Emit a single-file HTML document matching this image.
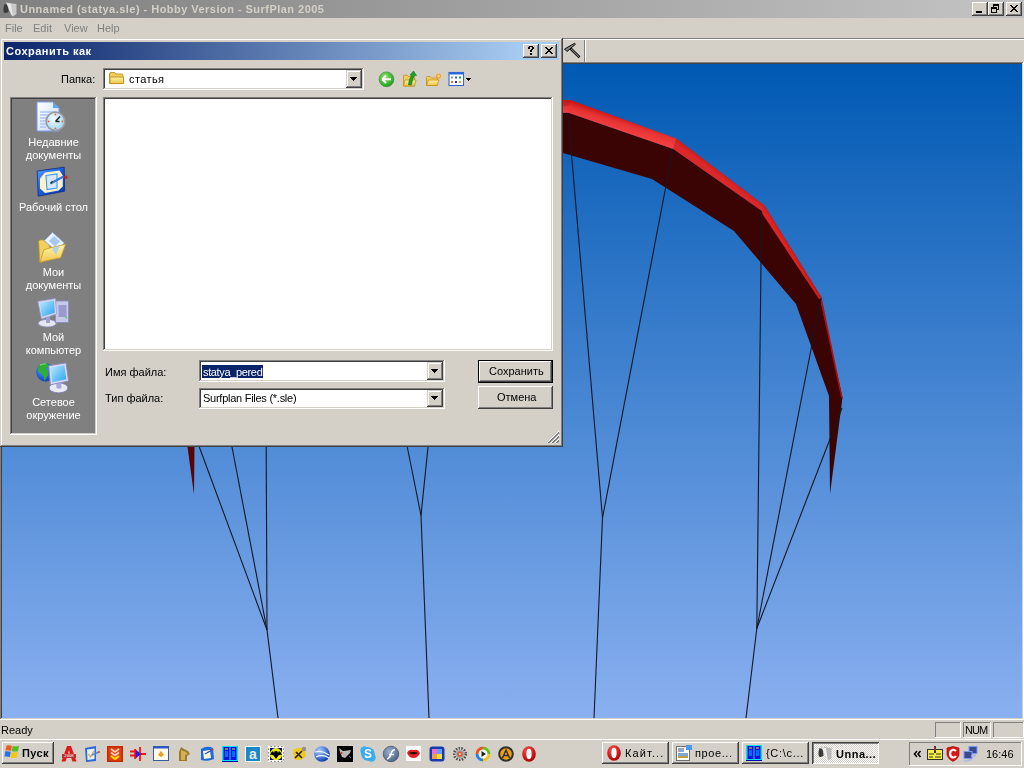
<!DOCTYPE html>
<html><head><meta charset="utf-8">
<style>
*{margin:0;padding:0;box-sizing:border-box}
html,body{width:1024px;height:768px;overflow:hidden;background:#d4d0c8;font-family:"Liberation Sans",sans-serif;font-size:11px;color:#000}
.a{position:absolute}
.t{position:absolute;white-space:nowrap;line-height:13px;will-change:transform}
.btn{position:absolute;background:#d4d0c8;box-shadow:inset -1px -1px #404040,inset 1px 1px #fff,inset -2px -2px #808080,inset 2px 2px #d4d0c8}
.sunk{position:absolute;background:#fff;box-shadow:inset -1px -1px #fff,inset 1px 1px #808080,inset -2px -2px #d4d0c8,inset 2px 2px #404040}
.sp{position:absolute;box-shadow:inset -1px -1px #fff,inset 1px 1px #808080}
.qi{width:16px;height:16px}
.pt{position:absolute;left:10px;width:87px;text-align:center;color:#fff;line-height:13px;white-space:nowrap;will-change:transform}
.dd{position:absolute;background:#d4d0c8;box-shadow:inset -1px -1px #404040,inset 1px 1px #d4d0c8,inset -2px -2px #808080,inset 2px 2px #fff}
.sy{}
</style></head><body>
<!-- main title bar -->
<div class="a" style="left:0;top:0;width:1024px;height:18px;background:linear-gradient(to right,#808080 0,#c0c0c0 966px)"></div>
<div class="t" style="left:20px;top:3px;font-weight:bold;color:#d4d0c8;letter-spacing:0.47px">Unnamed (statya.sle) - Hobby Version - SurfPlan 2005</div>
<div class="btn" style="left:972px;top:2px;width:16px;height:14px"></div>
<div class="btn" style="left:988px;top:2px;width:16px;height:14px"></div>
<div class="btn" style="left:1006px;top:2px;width:16px;height:14px"></div>
<!-- main title icons -->
<svg class="a" style="left:0;top:0" width="1024" height="64" viewBox="0 0 1024 64">
<path d="M4.5 4Q3 8 3.5 11Q4 13.5 5.5 13L8.5 12L8 5Z" fill="#3a3a3a"/>
<path d="M6 2.5L16.5 4V14L13 16.5L11.5 15Q9 10 6 2.5Z" fill="#c8c8c8"/>
<path d="M7 3L11 4Q12 12 13 16L11.5 15Q9 10 7 3Z" fill="#e8e8e8"/>
<rect x="976" y="11" width="6" height="2" fill="#000"/>
<g fill="#000"><rect x="993" y="4" width="6" height="2"/><rect x="993" y="6" width="1" height="1"/><rect x="998" y="6" width="1" height="4"/><rect x="997" y="9" width="1" height="1"/><rect x="991" y="7" width="6" height="2"/><rect x="991" y="9" width="1" height="3"/><rect x="996" y="9" width="1" height="3"/><rect x="991" y="12" width="6" height="1"/></g>
<g fill="#000"><rect x="1010" y="5" width="2" height="1"/><rect x="1016" y="5" width="2" height="1"/><rect x="1011" y="6" width="2" height="1"/><rect x="1015" y="6" width="2" height="1"/><rect x="1012" y="7" width="4" height="1"/><rect x="1013" y="8" width="2" height="1"/><rect x="1012" y="9" width="4" height="1"/><rect x="1011" y="10" width="2" height="1"/><rect x="1015" y="10" width="2" height="1"/><rect x="1010" y="11" width="2" height="1"/><rect x="1016" y="11" width="2" height="1"/></g>
<!-- hammer -->
<path d="M564.5 49L574.5 43.3L575.5 44.2L567 51.5Z" fill="#808080" stroke="#000" stroke-width="0.9" stroke-linejoin="round"/>
<path d="M570.5 48.5L579.5 57.3" stroke="#000" stroke-width="2.6"/>
<path d="M571 48.8L579 56.8" stroke="#808080" stroke-width="1.2"/>
<rect x="584" y="40" width="1" height="22" fill="#808080"/>
<rect x="585" y="40" width="1" height="22" fill="#fff"/>
</svg>
<!-- menu -->
<div class="t" style="left:5px;top:22px;color:#808080">File</div>
<div class="t" style="left:33px;top:22px;color:#808080">Edit</div>
<div class="t" style="left:64px;top:22px;color:#808080">View</div>
<div class="t" style="left:97px;top:22px;color:#808080">Help</div>
<div class="a" style="left:0;top:38px;width:1024px;height:1px;background:#808080"></div>
<div class="a" style="left:0;top:39px;width:1024px;height:1px;background:#fff"></div>
<!-- toolbar -->
<!-- viewport -->
<div class="a" style="left:0;top:62px;width:1024px;height:658px;background:#d4d0c8;box-shadow:inset -1px -1px #fff,inset 1px 1px #808080,inset -2px -2px #d4d0c8,inset 2px 2px #404040"></div>
<div class="a" style="left:2px;top:64px;width:1020px;height:654px;background:linear-gradient(to bottom,#0059b3,#8ab0f0)"></div>
<!-- status -->
<div class="t" style="left:1px;top:724px">Ready</div>
<!-- taskbar -->
<div class="a" style="left:0;top:739px;width:1024px;height:1px;background:#fff"></div>
<div class="btn" style="left:2px;top:742px;width:52px;height:22px"></div>
<div class="t" style="left:22px;top:747px;font-weight:bold;letter-spacing:0.4px">Пуск</div>
<div class="sp" style="left:935px;top:722px;width:26px;height:16px"></div>
<div class="sp" style="left:963px;top:722px;width:28px;height:16px"></div>
<div class="t" style="left:965px;top:724px;letter-spacing:-0.9px">NUM</div>
<div class="sp" style="left:993px;top:722px;width:31px;height:16px"></div>
<div class="btn" style="left:602px;top:742px;width:67px;height:22px"></div>
<div class="t" style="left:625px;top:747px;letter-spacing:1.1px">Кайт...</div>
<div class="btn" style="left:672px;top:742px;width:67px;height:22px"></div>
<div class="t" style="left:695px;top:747px;letter-spacing:0.6px">прое...</div>
<div class="btn" style="left:742px;top:742px;width:67px;height:22px"></div>
<div class="t" style="left:766px;top:747px;letter-spacing:0.7px">{C:\c...</div>
<div class="a" style="left:812px;top:742px;width:67px;height:22px;background:repeating-conic-gradient(#fff 0 25%,#d4d0c8 0 50%) 0 0/2px 2px;box-shadow:inset 1px 1px #404040,inset -1px -1px #fff,inset 2px 2px #808080"></div>
<div class="t" style="left:836px;top:748px;font-weight:bold;letter-spacing:0.5px">Unna...</div>
<div class="sp" style="left:909px;top:742px;width:113px;height:24px"></div>
<div class="t" style="left:986px;top:748px">16:46</div>

<!-- kite -->
<svg class="a" style="left:0;top:0" width="1024" height="768" viewBox="0 0 1024 768">
<defs><clipPath id="vp"><rect x="2" y="64" width="1020" height="654"/></clipPath>
<linearGradient id="k1" gradientUnits="userSpaceOnUse" x1="610" y1="113" x2="606" y2="126"><stop offset="0" stop-color="#c81616"/><stop offset="0.45" stop-color="#e43232"/><stop offset="1" stop-color="#f43e3e"/></linearGradient>
<linearGradient id="k2" gradientUnits="userSpaceOnUse" x1="726" y1="169" x2="720" y2="177"><stop offset="0" stop-color="#b01010"/><stop offset="0.5" stop-color="#c81c1c"/><stop offset="1" stop-color="#dc2828"/></linearGradient>
<linearGradient id="k2b" gradientUnits="userSpaceOnUse" x1="676" y1="140" x2="765" y2="208"><stop offset="0" stop-color="#000" stop-opacity="0"/><stop offset="1" stop-color="#000" stop-opacity="0.15"/></linearGradient>
<linearGradient id="k3" gradientUnits="userSpaceOnUse" x1="795" y1="250" x2="790" y2="253"><stop offset="0" stop-color="#b81010"/><stop offset="1" stop-color="#dc2424"/></linearGradient>
</defs>
<g clip-path="url(#vp)">
<polygon fill="#3a0404" points="540,112.75 568.4,112.75 673.3,149 762,211 820,298.5 842.5,397.5 830,494 829,396 796,304 734,231 652,179 563,153 540,145"/>
<polygon fill="url(#k1)" points="540,100 570.6,100 676.4,138.4 673.3,149 568.4,112.75 540,112.75"/>
<polygon fill="url(#k2)" points="676.4,138.4 764.7,205.5 762,211 673.3,149"/>
<polygon fill="url(#k3)" points="764.7,205.5 821.5,297 819.2,299.3 761,211.8"/>
<polygon fill="#b80a0a" points="821.5,297 842.5,397.5 841,397.5 820,298.8"/>
<polygon fill="#b81414" opacity="0.45" points="540,100 570.6,100 568.4,106 540,106"/>
<polygon fill="#5a0404" points="187.5,447 194.5,447 194,494.5"/>
<g stroke="#141822" stroke-width="1.1" fill="none">
<path d="M568 113L602.5 518L594 718"/>
<path d="M673 149L602.5 518"/>
<path d="M761.6 211L756.8 628.5L746 718"/>
<path d="M821 298L756.8 628.5"/>
<path d="M842 408L756.8 628.5"/>
<path d="M199.3 447L267 630L278 718"/>
<path d="M232 447L267 630"/>
<path d="M266.2 447L267 630"/>
<path d="M407.3 447L421 515.5L429 718"/>
<path d="M428 447L421 515.5"/>
</g>
</g>
</svg>
<svg class="a" style="left:0;top:738px" width="1024" height="30" viewBox="0 738 1024 30">
<defs>
<radialGradient id="opg" cx="0.4" cy="0.3" r="0.7"><stop offset="0" stop-color="#ff5050"/><stop offset="1" stop-color="#b00000"/></radialGradient>
<radialGradient id="geg" cx="0.35" cy="0.3" r="0.75"><stop offset="0" stop-color="#a8d0ff"/><stop offset="1" stop-color="#0a38b0"/></radialGradient>
<radialGradient id="flg" cx="0.4" cy="0.35" r="0.7"><stop offset="0" stop-color="#9ab0d0"/><stop offset="1" stop-color="#4a6088"/></radialGradient>
</defs>
<!-- start flag -->
<g transform="translate(4.5,745)">
<path d="M2 0.5Q4 -0.3 7.5 0.8L6.5 6Q3.5 5 1 5.5Z" fill="#f05a1a"/>
<path d="M8.2 1Q11 2 14.5 0.8L13.5 6.2Q10.5 7 7.2 6.2Z" fill="#50c020"/>
<path d="M0.8 6.3Q3.5 5.8 6.3 6.8L5.3 12Q2.5 11 0 11.6Z" fill="#2a70e8"/>
<path d="M7 7Q10.5 8 13.4 7L12.4 12.5Q9.5 13.4 6 12.4Z" fill="#f8c810"/>
</g>
<!-- quick launch -->
<g transform="translate(61,746)"><path d="M6 0H10L15.5 15.5H11.5L10 11H6L4.5 15.5H0.5Z M7 7.5H9L8 4Z" fill="#e01818" fill-rule="evenodd"/><rect x="1" y="8" width="14" height="4" fill="#b83030"/><text x="8" y="11.4" font-size="4.2" fill="#fff" text-anchor="middle" font-family="Liberation Sans">2008</text></g>
<g transform="translate(84,746)"><path d="M1 2L12 0V15L2 16Z" fill="#2a6ad8"/><path d="M3 3.5L10.5 2.5V13L3.5 14Z" fill="#e8f0ff"/><path d="M4.5 8L6.5 11L10 5" stroke="#d8b040" stroke-width="1.4" fill="none"/><path d="M8 9L15 6" stroke="#4a8ae0" stroke-width="1.5"/><circle cx="15" cy="6" r="1" fill="#e05020"/></g>
<g transform="translate(107,746)"><rect x="0" y="0" width="16" height="16" fill="#c02a00"/><rect x="1.5" y="1.5" width="13" height="13" fill="#e04010"/><path d="M4 3L8 6L12 3M4 6.5L8 9.5L12 6.5" stroke="#ffd0c0" stroke-width="1.6" fill="none"/><path d="M4 10L8 13L12 10" stroke="#ffe800" stroke-width="2" fill="none"/></g>
<g transform="translate(130,746)"><path d="M0 5.5H6M0 9.5H6M10 8H16M10 1V15" stroke="#ff1010" stroke-width="1.8"/><path d="M5 3V13L11 8Z" fill="#1a20e0"/><path d="M5 3V13" stroke="#ff1010" stroke-width="1.6"/></g>
<g transform="translate(153,746)"><rect x="0.5" y="0.5" width="15" height="14" fill="#fdf8e8" stroke="#3a5a9a"/><rect x="0.5" y="0.5" width="15" height="2" fill="#2a5ac8"/><path d="M5 9L8 5L11 9L8 11Z" fill="#e0a020"/></g>
<g transform="translate(176,746)"><path d="M3 15L3 6L5 1L8 3L12 5L14 8L11 10L11 15Z" fill="#9a7a30"/><path d="M5 4L10 6L12 8L9 9L9 14L5 14Z" fill="#d4b050"/></g>
<g transform="translate(199,746)"><path d="M2 3Q8 -1 14 2L15 13Q9 16 2 14Z" fill="#1a6ae0"/><path d="M4 5L11 4L12 12L5 13Z" fill="#fff4d8"/><path d="M6 8L13 4" stroke="#2a5ab0" stroke-width="1.4"/><circle cx="13.5" cy="3.5" r="1.1" fill="#e04020"/></g>
<g transform="translate(222,746)"><rect x="0" y="0" width="16" height="15" fill="#00e0f0"/><rect x="1.5" y="1" width="6" height="13" fill="#1010e0"/><rect x="8.5" y="1" width="6" height="13" fill="#1010e0"/><path d="M3 3H6M10 3H13" stroke="#ffe000" stroke-width="1"/><path d="M3 6H6M10 6H13M3 8H6M10 8H13M3 10H6M10 10H13" stroke="#00e0f0" stroke-width="0.9"/><rect x="0" y="15" width="16" height="1" fill="#0000a0"/></g>
<g transform="translate(245,746)"><rect x="0" y="0" width="16" height="16" fill="#fff"/><rect x="1" y="1" width="14" height="14" fill="#1a88c8"/><text x="8" y="13" font-size="14" font-weight="bold" fill="#e8e8e8" text-anchor="middle" font-family="Liberation Sans">a</text></g>
<g transform="translate(268,746)"><rect x="0" y="0" width="16" height="16" fill="#fff"/><g fill="#888"><rect x="2.5" y="0" width="1.5" height="1.2"/><rect x="6" y="0" width="1.5" height="1.2"/><rect x="9.5" y="0" width="1.5" height="1.2"/><rect x="13" y="0" width="1.5" height="1.2"/><rect x="2.5" y="14.8" width="1.5" height="1.2"/><rect x="6" y="14.8" width="1.5" height="1.2"/><rect x="9.5" y="14.8" width="1.5" height="1.2"/><rect x="13" y="14.8" width="1.5" height="1.2"/><rect x="0" y="2.5" width="1.2" height="1.5"/><rect x="0" y="6" width="1.2" height="1.5"/><rect x="0" y="9.5" width="1.2" height="1.5"/><rect x="0" y="13" width="1.2" height="1.5"/><rect x="14.8" y="2.5" width="1.2" height="1.5"/><rect x="14.8" y="6" width="1.2" height="1.5"/><rect x="14.8" y="9.5" width="1.2" height="1.5"/><rect x="14.8" y="13" width="1.2" height="1.5"/></g><rect x="2" y="2" width="12" height="12" fill="#00088a"/><circle cx="8" cy="8.2" r="6.1" fill="#f4f000"/><path d="M2 9Q3 6 5 5L6 7L7 4.5L8 5.5L9 4.5L10 7L11 5Q13 6 14 9Q12 8.5 10.5 9.5L8 13L5.5 9.5Q4 8.5 2 9Z" fill="#000"/></g>
<g transform="translate(291,746)"><path d="M2 4Q8 0 14 3L15 10Q10 16 3 13Z" fill="#f0c820"/><path d="M4 12L11 5M5 6L11 12" stroke="#222" stroke-width="1.6"/><circle cx="13" cy="3" r="2.2" fill="#909090"/></g>
<g transform="translate(314,746)"><circle cx="8" cy="8" r="7.8" fill="url(#geg)"/><path d="M1 6Q8 4 15 9M2 11Q9 8 15 12" stroke="#f0f8ff" stroke-width="1.3" fill="none"/></g>
<g transform="translate(337,746)"><rect x="0" y="0" width="16" height="16" fill="#000"/><path d="M2 2L6 5L14 4L13 7L8 12L5 11L3 6Z" fill="#b8b8b8"/><circle cx="4.5" cy="7" r="0.9" fill="#e02020"/><path d="M12 10L14 12" stroke="#6060e0" stroke-width="1"/></g>
<g transform="translate(360,746)"><circle cx="4.5" cy="4.5" r="4.3" fill="#40b0f0"/><circle cx="11.5" cy="11.5" r="4.3" fill="#40b0f0"/><circle cx="8" cy="8" r="6.8" fill="#38a8f0"/><text x="8" y="12.3" font-size="12" font-weight="bold" fill="#fff" text-anchor="middle" font-family="Liberation Sans">S</text></g>
<g transform="translate(383,746)"><circle cx="8" cy="8" r="7.8" fill="url(#flg)" stroke="#33445c" stroke-width="0.6"/><path d="M4 13Q7 12 8 8Q9 4 12 3.5M6 8.5H11" stroke="#fff" stroke-width="1.5" fill="none"/></g>
<g transform="translate(406,746)"><rect x="0" y="0" width="15" height="15" fill="#fff"/><path d="M1 7Q3 2.5 7.5 4Q12 2.5 14 7Q12 12 7.5 12Q3 12 1 7Z" fill="#e02020"/><path d="M3 7Q7.5 5 12 7Q7.5 9.5 3 7Z" fill="#111"/></g>
<g transform="translate(429,746)"><rect x="0.5" y="0.5" width="15" height="15" rx="3" fill="#1a3ab0"/><rect x="3" y="3" width="5" height="5" fill="#f070c0"/><rect x="8" y="3" width="5" height="5" fill="#60a0ff"/><rect x="3" y="8" width="5" height="5" fill="#f0a040"/><rect x="8" y="8" width="5" height="5" fill="#f0e040"/></g>
<g transform="translate(452,746)"><circle cx="8" cy="8" r="5.8" fill="none" stroke="#505050" stroke-width="2.6" stroke-dasharray="1.5 1.3"/><circle cx="8" cy="8" r="4" fill="#a0a0a0"/><circle cx="8" cy="8" r="2.6" fill="#e05020"/><circle cx="8" cy="8" r="1.2" fill="#c8c8c8"/></g>
<g transform="translate(475,746)"><circle cx="8" cy="8" r="7.5" fill="#fff"/><path d="M8 0.5A7.5 7.5 0 0 1 15.5 8H12.5A4.5 4.5 0 0 0 8 3.5Z" fill="#60c020"/><path d="M15.5 8A7.5 7.5 0 0 1 8 15.5V12.5A4.5 4.5 0 0 0 12.5 8Z" fill="#f0c020"/><path d="M8 15.5A7.5 7.5 0 0 1 0.5 8H3.5A4.5 4.5 0 0 0 8 12.5Z" fill="#2a80e0"/><path d="M0.5 8A7.5 7.5 0 0 1 8 0.5V3.5A4.5 4.5 0 0 0 3.5 8Z" fill="#f05020"/><path d="M6.5 5V11L11 8Z" fill="#222"/></g>
<g transform="translate(498,746)"><circle cx="8" cy="8" r="7.8" fill="#303030"/><circle cx="8" cy="8" r="5.8" fill="#f0a010"/><path d="M4.5 12L8 4L11.5 12M6 9.5H10" stroke="#303030" stroke-width="1.5" fill="none"/></g>
<g transform="translate(521,746)"><ellipse cx="8" cy="8" rx="6.8" ry="7.8" fill="url(#opg)"/><ellipse cx="8" cy="8" rx="2.6" ry="5.2" fill="#fff"/></g>
<!-- task buttons icons -->
<g transform="translate(606,745)"><ellipse cx="8" cy="8" rx="6.8" ry="7.8" fill="url(#opg)"/><ellipse cx="8" cy="8" rx="2.6" ry="5.2" fill="#fff"/></g>
<g transform="translate(676,745)"><rect x="0.5" y="1.5" width="13" height="14" fill="#fff" stroke="#707070"/><path d="M2 4H8M2 6H8" stroke="#2a4a9a" stroke-width="1"/><rect x="2" y="8" width="10" height="5" fill="#80a8d0"/><rect x="2" y="11" width="10" height="2" fill="#c0a040"/><rect x="10" y="0" width="6" height="5" fill="#4a9af0"/></g>
<g transform="translate(746,745)"><rect x="0" y="0" width="16" height="15" fill="#00e0f0"/><rect x="1.5" y="1" width="6" height="13" fill="#1010e0"/><rect x="8.5" y="1" width="6" height="13" fill="#1010e0"/><path d="M3 3H6M10 3H13" stroke="#ffe000" stroke-width="1"/><path d="M3 6H6M10 6H13M3 8H6M10 8H13M3 10H6M10 10H13" stroke="#00e0f0" stroke-width="0.9"/><rect x="0" y="15" width="16" height="1" fill="#0000a0"/></g>
<g transform="translate(815,744)"><path d="M4.5 4Q3 8 3.5 11Q4 13.5 5.5 13L8.5 12L8 5Z" fill="#3a3a3a"/><path d="M6 2.5L16.5 4V14L13 16.5L11.5 15Q9 10 6 2.5Z" fill="#b8b8b8"/><path d="M7 3L11 4Q12 12 13 16L11.5 15Q9 10 7 3Z" fill="#f0f0f0"/></g>
<!-- tray -->
<path d="M917 751L914.5 754L917 757M920.5 751L918 754L920.5 757" stroke="#000" stroke-width="1.5" fill="none"/>
<g transform="translate(927,746)"><rect x="0.5" y="3.5" width="15" height="10" fill="#f8f040" stroke="#303030"/><rect x="7" y="0" width="2" height="7" fill="#303030"/><rect x="7.5" y="1" width="1" height="4" fill="#e03020"/><path d="M2 8H7M9 8H14M2 11H6M8 11H14" stroke="#303030" stroke-width="1"/></g>
<g transform="translate(946,746)"><path d="M1 2Q7 -1 13 2L13 9Q12 13 7 15.5Q2 13 1 9Z" fill="#d81818" stroke="#a00000" stroke-width="0.6"/><path d="M10 5Q8.5 3.5 7 3.8Q4 4.5 4 8Q4.5 11.5 7.5 11.5Q9 11.5 10 10" stroke="#fff" stroke-width="2.2" fill="none"/></g>
<g transform="translate(963,746)"><rect x="6" y="0.5" width="8" height="7" fill="#3a4a90" stroke="#7a9af0"/><rect x="1" y="5.5" width="8" height="7" fill="#3a4a90" stroke="#7a9af0"/><path d="M0 15L7 13L10 14L3 16Z" fill="#b0b8e0"/><path d="M8 9L13 8V10L9 12Z" fill="#b0b8e0"/></g>
</svg>
<!-- dialog -->
<div class="a" style="left:0;top:38px;width:563px;height:409px;background:#d4d0c8;box-shadow:inset -1px -1px #404040,inset 1px 1px #d4d0c8,inset -2px -2px #808080,inset 2px 2px #fff"></div>
<div class="a" style="left:4px;top:42px;width:555px;height:18px;background:linear-gradient(to right,#0a246a 0,#a6caf0 516px)"></div>
<div class="t" style="left:6px;top:45px;font-weight:bold;color:#fff;letter-spacing:0.5px">Сохранить как</div>
<div class="btn" style="left:523px;top:44px;width:16px;height:14px"></div>
<div class="btn" style="left:541px;top:44px;width:16px;height:14px"></div>
<!-- folder row -->
<div class="t sy" style="left:61px;top:73px">Папка:</div>
<div class="sunk" style="left:103px;top:68px;width:261px;height:22px"></div>
<div class="t sy" style="left:129px;top:73px;letter-spacing:0.4px">статья</div>
<div class="dd" style="left:346px;top:70px;width:16px;height:18px"></div>
<!-- places -->
<div class="a" style="left:10px;top:97px;width:87px;height:338px;background:#808080;box-shadow:inset -1px -1px #fff,inset 1px 1px #808080,inset -2px -2px #d4d0c8,inset 2px 2px #404040"></div>
<svg class="a" style="left:0;top:0" width="110" height="440" viewBox="0 0 110 440">
<defs>
<linearGradient id="docg" x1="0" y1="0" x2="1" y2="1"><stop offset="0" stop-color="#fff"/><stop offset="1" stop-color="#c8d8f8"/></linearGradient>
<radialGradient id="clk" cx="0.4" cy="0.35" r="0.7"><stop offset="0" stop-color="#f4fcff"/><stop offset="1" stop-color="#9cd4f0"/></radialGradient>
<linearGradient id="scr" x1="0" y1="0" x2="1" y2="1"><stop offset="0" stop-color="#b8ecff"/><stop offset="1" stop-color="#2aa0f0"/></linearGradient>
<linearGradient id="fold" x1="0" y1="0" x2="0" y2="1"><stop offset="0" stop-color="#fff4b0"/><stop offset="1" stop-color="#f0c850"/></linearGradient>
<radialGradient id="glb" cx="0.4" cy="0.35" r="0.7"><stop offset="0" stop-color="#4aa8ff"/><stop offset="1" stop-color="#0a3ab8"/></radialGradient>
</defs>
<!-- recent -->
<path d="M37 102H53L59 108V131H37Z" fill="url(#docg)" stroke="#7a9ae8" stroke-width="1"/>
<path d="M53 102V108H59" fill="#5aa8f0"/>
<g stroke="#8ab4f4" stroke-width="1.2"><path d="M40 112H56M40 115H56M40 118H46M40 121H46M40 124H46M40 127H46"/></g>
<circle cx="55.5" cy="121.4" r="9.3" fill="url(#clk)" stroke="#9a9aa6" stroke-width="1.8"/>
<path d="M55.5 121.5L60 116.5M55.5 121.5H59.5" stroke="#222" stroke-width="1.4"/>
<g fill="#f05a1a"><circle cx="55.5" cy="114.5" r="0.9"/><circle cx="55.5" cy="128.3" r="0.9"/><circle cx="48.6" cy="121.4" r="0.9"/><circle cx="62.4" cy="121.4" r="0.9"/></g>
<!-- desktop -->
<defs><linearGradient id="dskg" x1="0" y1="0" x2="1" y2="1"><stop offset="0" stop-color="#5aa0f8"/><stop offset="0.5" stop-color="#1a5ad8"/><stop offset="1" stop-color="#0a3aa0"/></linearGradient></defs>
<path d="M37.2 171L64.2 167.2L64.6 191.2L38.2 196.2Z" fill="url(#dskg)" stroke="#0a2a90" stroke-width="0.8"/>
<path d="M40 178.5L45 172.5L59.5 170.5L62.8 175.5L62.8 186.5L58.5 190.5L45 193L40 188.5Z" fill="#fdf4cc"/>
<path d="M46 175.5L57 174V188L47 189.5Z" fill="#d6e8ff" stroke="#3a9af0" stroke-width="1.1"/>
<path d="M50.5 183.5L63.5 176.5" stroke="#3a78d8" stroke-width="2.2"/>
<path d="M50.5 183.5L52.5 181" stroke="#222" stroke-width="1.2"/>
<circle cx="65.8" cy="177.3" r="1.8" fill="#d82010"/>
<!-- my docs -->
<path d="M38.7 241.5Q38.7 240 40.5 240H43.5L46 242.5H48L50 248L42 262.2H39.7Z" fill="#f2d060" stroke="#c8981c" stroke-width="0.8"/>
<path d="M44.4 240.6L52.5 232.5L64.2 242.9L56 251Z" fill="#eef4ff" stroke="#8ab0f0" stroke-width="0.8"/>
<path d="M49 241L54 236L60 241.5L55 246.5Z" fill="#a8c8f8"/>
<path d="M43.9 249.8Q48 248.5 52.3 247.3L65.6 244.3L60.7 257.7L39.9 262.2Z" fill="url(#fold)" stroke="#c8981c" stroke-width="0.8"/>
<path d="M52 248.5L60 245.5L56 255Z" fill="#9cd0f8" opacity="0.8"/>
<!-- my computer -->
<ellipse cx="47.2" cy="323.2" rx="9" ry="3.8" fill="#e6e6f0" stroke="#8888b8" stroke-width="0.8"/>
<rect x="46" y="315" width="4" height="8" fill="#a0a0d0"/>
<rect x="55.5" y="301" width="13" height="21.5" fill="#c8c8e8" stroke="#8a8ac0" stroke-width="0.8"/>
<rect x="58.5" y="305" width="8" height="12" fill="#9a9ad0"/>
<circle cx="66" cy="317.5" r="0.9" fill="#40e040"/>
<path d="M37.8 301.4L55.5 298.5L56.5 314L41.5 319Z" fill="#d8d8f0" stroke="#9a9ad0" stroke-width="0.8"/>
<path d="M39.8 303L54 300.5L54.8 312.8L42 316.8Z" fill="url(#scr)"/>
<!-- network -->
<circle cx="45.4" cy="372.3" r="9.2" fill="url(#glb)"/>
<path d="M38.5 366Q42 362.5 47 363.5Q49 365 48 367L45.5 368.5L47.5 371L48.5 374.5L46 378L44.5 381L43.5 376L41 373L38 371.5Z" fill="#30b030"/>
<path d="M40 365Q43 363.5 46 364" stroke="#a8f090" stroke-width="1" fill="none" opacity="0.7"/>
<ellipse cx="58.5" cy="387.9" rx="9.4" ry="5" fill="#eaeaf4" stroke="#7a7ab0" stroke-width="0.9"/>
<path d="M56 379L61 378.5L61.5 388Q59 389.5 56.5 388Z" fill="#a8a8d8"/>
<path d="M48.75 365.75L66 362.9L68.5 381L50.4 384.75Z" fill="#d8d8f0" stroke="#8a8ac8" stroke-width="0.9"/>
<path d="M50.8 367.5L64.3 365.2L66.3 379.3L52.3 382.3Z" fill="url(#scr)"/>
</svg>
<div class="pt sy" style="top:136px">Недавние</div>
<div class="pt sy" style="top:149px">документы</div>
<div class="pt sy" style="top:201px">Рабочий стол</div>
<div class="pt sy" style="top:266px">Мои</div>
<div class="pt sy" style="top:279px">документы</div>
<div class="pt sy" style="top:331px">Мой</div>
<div class="pt sy" style="top:344px">компьютер</div>
<div class="pt sy" style="top:396px">Сетевое</div>
<div class="pt sy" style="top:409px">окружение</div>

<!-- file list -->
<div class="sunk" style="left:103px;top:97px;width:450px;height:254px"></div>
<!-- bottom -->
<div class="t sy" style="left:105px;top:366px">Имя файла:</div>
<div class="t sy" style="left:105px;top:392px">Тип файла:</div>
<div class="sunk" style="left:199px;top:360px;width:246px;height:22px"></div>
<div class="a" style="left:202px;top:365px;width:61px;height:13px;background:#0a246a"></div>
<div class="t" style="left:203px;top:366px;color:#fff;letter-spacing:-0.35px">statya_pered</div>
<div class="dd" style="left:427px;top:362px;width:16px;height:18px"></div>
<div class="sunk" style="left:199px;top:388px;width:246px;height:21px"></div>
<div class="t sy" style="left:203px;top:392px;letter-spacing:-0.26px">Surfplan Files (*.sle)</div>
<div class="dd" style="left:427px;top:390px;width:16px;height:17px"></div>
<div class="btn" style="left:478px;top:360px;width:75px;height:23px;box-shadow:inset -1px -1px #000,inset 1px 1px #000,inset -2px -2px #404040,inset 2px 2px #fff,inset -3px -3px #808080"></div>
<div class="t sy" style="left:489px;top:365px">Сохранить</div>
<div class="btn" style="left:478px;top:386px;width:75px;height:23px"></div>
<div class="t sy" style="left:497px;top:391px">Отмена</div>
<!-- dialog toolbar icons -->
<svg class="a" style="left:0;top:40px" width="563" height="60" viewBox="0 40 563 60">
<defs>
<radialGradient id="grn" cx="0.4" cy="0.35" r="0.7"><stop offset="0" stop-color="#8ee86a"/><stop offset="1" stop-color="#1a9a1a"/></radialGradient>
<linearGradient id="yf" x1="0" y1="0" x2="0" y2="1"><stop offset="0" stop-color="#fff2a8"/><stop offset="1" stop-color="#eec44a"/></linearGradient>
</defs>
<!-- combo folder icon -->
<path d="M109.5 74Q109.5 72.5 111 72.5H114.5L116 74H121.5Q123 74 123 75.5V83.5H109.5Z" fill="#f0cc5a" stroke="#c0901a" stroke-width="0.9"/>
<path d="M110 77H123.5V83.6H110Z" fill="url(#yf)" stroke="#c0901a" stroke-width="0.9"/>
<!-- dropdown arrow -->
<g fill="#000"><rect x="350" y="77" width="7" height="1"/><rect x="351" y="78" width="5" height="1"/><rect x="352" y="79" width="3" height="1"/><rect x="353" y="80" width="1" height="1"/></g>
<!-- back -->
<circle cx="386.5" cy="79.3" r="7.4" fill="url(#grn)" stroke="#2a8a2a" stroke-width="0.6"/>
<path d="M382.3 79.3L386 75.6M382.3 79.3L386 83M382.5 79.3H391" stroke="#fff" stroke-width="2.1" fill="none"/>
<!-- up folder -->
<path d="M403.5 76Q403.5 75 404.5 75H407L408.5 76.5H414.5V86H403.5Z" fill="#f0cc5a" stroke="#c0901a" stroke-width="0.8"/>
<path d="M403.5 86L405 80H416L414.5 86Z" fill="url(#yf)" stroke="#c0901a" stroke-width="0.8"/>
<path d="M408.5 85Q409 78 412 75.5L410 75L413.5 71L416.5 75.5L414.5 75.5Q412.5 78 411.5 85Z" fill="#1aa02a" stroke="#0a6a10" stroke-width="0.5"/>
<!-- new folder -->
<path d="M426.5 77.5Q426.5 76.5 427.5 76.5H430L431.5 78H437.5V85.5H426.5Z" fill="#f0cc5a" stroke="#c0901a" stroke-width="0.8"/>
<path d="M426.5 85.5L428.5 80H439L437 85.5Z" fill="url(#yf)" stroke="#c0901a" stroke-width="0.8"/>
<circle cx="438.5" cy="76" r="2.6" fill="#ff9a30"/>
<circle cx="438.5" cy="76" r="1.2" fill="#ffef60"/>
<!-- view -->
<rect x="449" y="72.5" width="14.5" height="13" fill="#fff" stroke="#2a6ad8" stroke-width="1.1"/>
<rect x="449" y="72.5" width="14.5" height="2" fill="#2a6ad8"/>
<g><rect x="451" y="76.5" width="2" height="2" fill="#8a8ae0"/><rect x="455" y="76.5" width="2" height="2" fill="#2a6ad8"/><rect x="459" y="76.5" width="2" height="2" fill="#1a9a2a"/>
<rect x="451" y="81" width="2" height="2" fill="#e86a4a"/><rect x="455" y="81" width="2" height="2" fill="#1a3a9a"/><rect x="459" y="81" width="2" height="2" fill="#d8a030"/></g>
<g fill="#000"><rect x="466" y="78" width="5" height="1"/><rect x="467" y="79" width="3" height="1"/><rect x="468" y="80" width="1" height="1"/></g>
<!-- title buttons glyphs -->
<g fill="#000"><rect x="529" y="46" width="4" height="1"/><rect x="528" y="47" width="2" height="2"/><rect x="532" y="47" width="2" height="2"/><rect x="531" y="49" width="2" height="1"/><rect x="530" y="50" width="2" height="2"/><rect x="530" y="53" width="2" height="2"/></g>
<g fill="#000"><rect x="545" y="47" width="2" height="1"/><rect x="551" y="47" width="2" height="1"/><rect x="546" y="48" width="2" height="1"/><rect x="550" y="48" width="2" height="1"/><rect x="547" y="49" width="4" height="1"/><rect x="548" y="50" width="2" height="1"/><rect x="547" y="51" width="4" height="1"/><rect x="546" y="52" width="2" height="1"/><rect x="550" y="52" width="2" height="1"/><rect x="545" y="53" width="2" height="1"/><rect x="551" y="53" width="2" height="1"/></g>
<!-- resize grip placeholder -->
</svg>
<svg class="a" style="left:0;top:0" width="563" height="450" viewBox="0 0 563 450">
<g fill="#000"><rect x="431" y="369" width="7" height="1"/><rect x="432" y="370" width="5" height="1"/><rect x="433" y="371" width="3" height="1"/><rect x="434" y="372" width="1" height="1"/></g>
<g fill="#000"><rect x="431" y="396" width="7" height="1"/><rect x="432" y="397" width="5" height="1"/><rect x="433" y="398" width="3" height="1"/><rect x="434" y="399" width="1" height="1"/></g>
<g fill="#fff"><rect x="547" y="442" width="1" height="1"/><rect x="548" y="441" width="1" height="1"/><rect x="549" y="440" width="1" height="1"/><rect x="550" y="439" width="1" height="1"/><rect x="551" y="438" width="1" height="1"/><rect x="552" y="437" width="1" height="1"/><rect x="553" y="436" width="1" height="1"/><rect x="554" y="435" width="1" height="1"/><rect x="555" y="434" width="1" height="1"/><rect x="556" y="433" width="1" height="1"/><rect x="557" y="432" width="1" height="1"/><rect x="558" y="431" width="1" height="1"/><rect x="551" y="442" width="1" height="1"/><rect x="552" y="441" width="1" height="1"/><rect x="553" y="440" width="1" height="1"/><rect x="554" y="439" width="1" height="1"/><rect x="555" y="438" width="1" height="1"/><rect x="556" y="437" width="1" height="1"/><rect x="557" y="436" width="1" height="1"/><rect x="558" y="435" width="1" height="1"/><rect x="555" y="442" width="1" height="1"/><rect x="556" y="441" width="1" height="1"/><rect x="557" y="440" width="1" height="1"/><rect x="558" y="439" width="1" height="1"/></g><g fill="#808080"><rect x="548" y="442" width="1" height="1"/><rect x="549" y="441" width="1" height="1"/><rect x="550" y="440" width="1" height="1"/><rect x="551" y="439" width="1" height="1"/><rect x="552" y="438" width="1" height="1"/><rect x="553" y="437" width="1" height="1"/><rect x="554" y="436" width="1" height="1"/><rect x="555" y="435" width="1" height="1"/><rect x="556" y="434" width="1" height="1"/><rect x="557" y="433" width="1" height="1"/><rect x="558" y="432" width="1" height="1"/><rect x="549" y="442" width="1" height="1"/><rect x="550" y="441" width="1" height="1"/><rect x="551" y="440" width="1" height="1"/><rect x="552" y="439" width="1" height="1"/><rect x="553" y="438" width="1" height="1"/><rect x="554" y="437" width="1" height="1"/><rect x="555" y="436" width="1" height="1"/><rect x="556" y="435" width="1" height="1"/><rect x="557" y="434" width="1" height="1"/><rect x="558" y="433" width="1" height="1"/><rect x="552" y="442" width="1" height="1"/><rect x="553" y="441" width="1" height="1"/><rect x="554" y="440" width="1" height="1"/><rect x="555" y="439" width="1" height="1"/><rect x="556" y="438" width="1" height="1"/><rect x="557" y="437" width="1" height="1"/><rect x="558" y="436" width="1" height="1"/><rect x="553" y="442" width="1" height="1"/><rect x="554" y="441" width="1" height="1"/><rect x="555" y="440" width="1" height="1"/><rect x="556" y="439" width="1" height="1"/><rect x="557" y="438" width="1" height="1"/><rect x="558" y="437" width="1" height="1"/><rect x="556" y="442" width="1" height="1"/><rect x="557" y="441" width="1" height="1"/><rect x="558" y="440" width="1" height="1"/><rect x="557" y="442" width="1" height="1"/><rect x="558" y="441" width="1" height="1"/></g>
</svg>
</body></html>
